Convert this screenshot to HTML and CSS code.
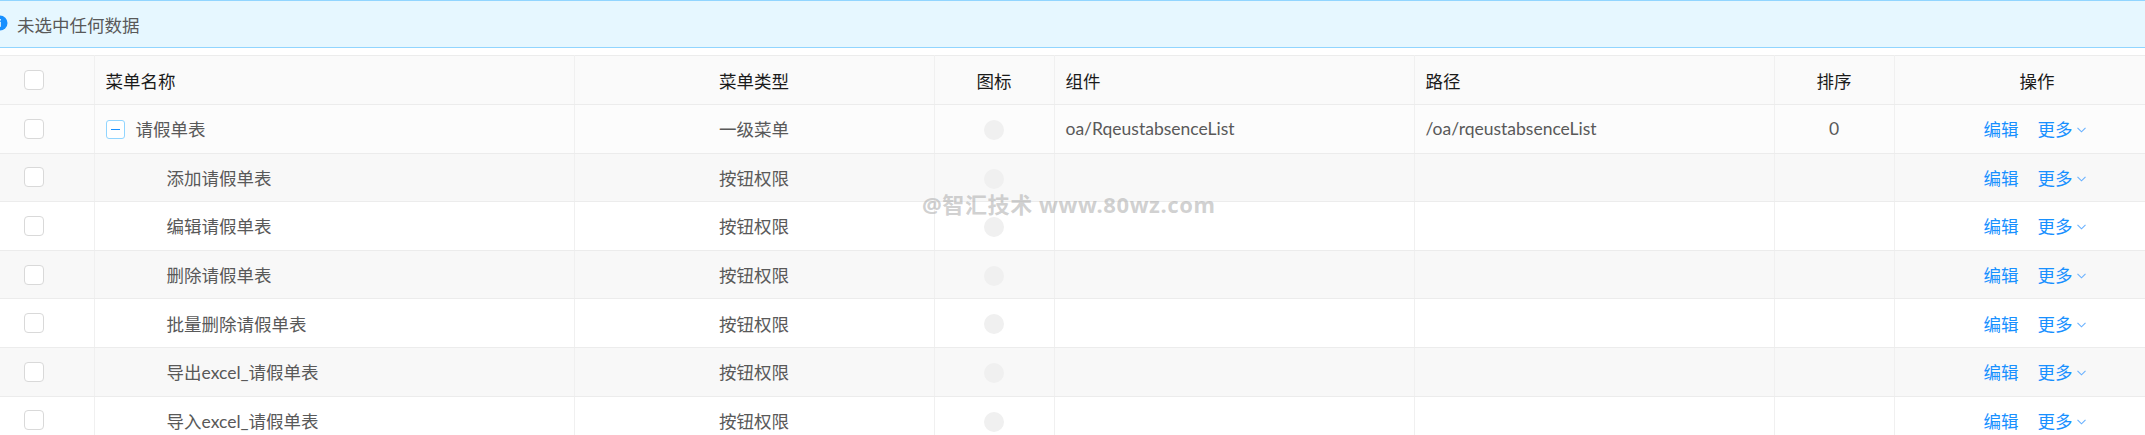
FILE: index.html
```html
<!DOCTYPE html>
<html lang="zh-CN">
<head>
    <meta charset="UTF-8">
    <title>菜单管理</title>
    <link rel="stylesheet" href="styles.css">
</head>
<body>
    <div class="page">
        <div class="alert">
            <svg class="alert-icon" width="16" height="16" viewBox="0 0 16 16"><circle cx="8" cy="8" r="7.5" fill="#1890ff"/><rect x="7.2" y="6.8" width="1.6" height="5" fill="#fff"/><rect x="7.2" y="4" width="1.6" height="1.6" fill="#fff"/></svg>
            <span>未选中任何数据</span>
        </div>

        <table class="menu-table">
            <colgroup>
                <col style="width:94px">
                <col style="width:480px">
                <col style="width:360px">
                <col style="width:120px">
                <col style="width:360px">
                <col style="width:360px">
                <col style="width:120px">
                <col style="width:286px">
            </colgroup>
            <thead>
                <tr>
                    <th class="col-check"><span class="checkbox"></span></th>
                    <th>菜单名称</th>
                    <th class="center">菜单类型</th>
                    <th class="center">图标</th>
                    <th>组件</th>
                    <th>路径</th>
                    <th class="center">排序</th>
                    <th class="center">操作</th>
                </tr>
            </thead>
            <tbody>
                <tr class="row-parent">
                    <td class="col-check"><span class="checkbox"></span></td>
                    <td><span class="tree-toggle"></span><span class="name">请假单表</span></td>
                    <td class="center">一级菜单</td>
                    <td class="center"><span class="icon-dot"></span></td>
                    <td>oa/RqeustabsenceList</td>
                    <td>/oa/rqeustabsenceList</td>
                    <td class="center">0</td>
                    <td class="actions"><a>编辑</a><a>更多<svg class="chevron" width="9" height="6" viewBox="0 0 9 6"><polyline points="0.5,0.8 4.5,4.8 8.5,0.8" fill="none" stroke="#69b1ff" stroke-width="1.1"/></svg></a></td>
                </tr>
                <tr class="row-alt">
                    <td class="col-check"><span class="checkbox"></span></td>
                    <td class="child">添加请假单表</td>
                    <td class="center">按钮权限</td>
                    <td class="center"><span class="icon-dot"></span></td>
                    <td></td>
                    <td></td>
                    <td></td>
                    <td class="actions"><a>编辑</a><a>更多<svg class="chevron" width="9" height="6" viewBox="0 0 9 6"><polyline points="0.5,0.8 4.5,4.8 8.5,0.8" fill="none" stroke="#69b1ff" stroke-width="1.1"/></svg></a></td>
                </tr>
                <tr>
                    <td class="col-check"><span class="checkbox"></span></td>
                    <td class="child">编辑请假单表</td>
                    <td class="center">按钮权限</td>
                    <td class="center"><span class="icon-dot"></span></td>
                    <td></td>
                    <td></td>
                    <td></td>
                    <td class="actions"><a>编辑</a><a>更多<svg class="chevron" width="9" height="6" viewBox="0 0 9 6"><polyline points="0.5,0.8 4.5,4.8 8.5,0.8" fill="none" stroke="#69b1ff" stroke-width="1.1"/></svg></a></td>
                </tr>
                <tr class="row-alt">
                    <td class="col-check"><span class="checkbox"></span></td>
                    <td class="child">删除请假单表</td>
                    <td class="center">按钮权限</td>
                    <td class="center"><span class="icon-dot"></span></td>
                    <td></td>
                    <td></td>
                    <td></td>
                    <td class="actions"><a>编辑</a><a>更多<svg class="chevron" width="9" height="6" viewBox="0 0 9 6"><polyline points="0.5,0.8 4.5,4.8 8.5,0.8" fill="none" stroke="#69b1ff" stroke-width="1.1"/></svg></a></td>
                </tr>
                <tr>
                    <td class="col-check"><span class="checkbox"></span></td>
                    <td class="child">批量删除请假单表</td>
                    <td class="center">按钮权限</td>
                    <td class="center"><span class="icon-dot"></span></td>
                    <td></td>
                    <td></td>
                    <td></td>
                    <td class="actions"><a>编辑</a><a>更多<svg class="chevron" width="9" height="6" viewBox="0 0 9 6"><polyline points="0.5,0.8 4.5,4.8 8.5,0.8" fill="none" stroke="#69b1ff" stroke-width="1.1"/></svg></a></td>
                </tr>
                <tr class="row-alt">
                    <td class="col-check"><span class="checkbox"></span></td>
                    <td class="child">导出excel_请假单表</td>
                    <td class="center">按钮权限</td>
                    <td class="center"><span class="icon-dot"></span></td>
                    <td></td>
                    <td></td>
                    <td></td>
                    <td class="actions"><a>编辑</a><a>更多<svg class="chevron" width="9" height="6" viewBox="0 0 9 6"><polyline points="0.5,0.8 4.5,4.8 8.5,0.8" fill="none" stroke="#69b1ff" stroke-width="1.1"/></svg></a></td>
                </tr>
                <tr>
                    <td class="col-check"><span class="checkbox"></span></td>
                    <td class="child">导入excel_请假单表</td>
                    <td class="center">按钮权限</td>
                    <td class="center"><span class="icon-dot"></span></td>
                    <td></td>
                    <td></td>
                    <td></td>
                    <td class="actions"><a>编辑</a><a>更多<svg class="chevron" width="9" height="6" viewBox="0 0 9 6"><polyline points="0.5,0.8 4.5,4.8 8.5,0.8" fill="none" stroke="#69b1ff" stroke-width="1.1"/></svg></a></td>
                </tr>
            </tbody>
        </table>

        <div class="watermark">@智汇技术 www.80wz.com</div>
    </div>
</body>
</html>
```

FILE: styles.css
```css
body {
    margin: 0;
    font-family: "Lato", "Noto Sans CJK SC", sans-serif;
    font-size: 17.5px;
    color: #595959;
    background-color: white;
    overflow: hidden;
}
.page {
    position: relative;
    width: 2145px;
}

/* alert bar */
.alert {
    display: flex;
    align-items: center;
    gap: 9px;
    height: 46px;
    background-color: #e6f7ff;
    border-top: 1px solid #91d5ff;
    border-bottom: 1px solid #91d5ff;
    color: #595959;
}
.alert-icon {
    margin-left: -8px;
    margin-top: -2px;
}

/* table */
.menu-table {
    margin-top: 7px;
    table-layout: fixed;
    border-collapse: collapse;
    width: 2180px;
}
.menu-table th,
.menu-table td {
    padding: 0 11px;
    border-right: 1px solid #f0f0f0;
    border-bottom: 1px solid #ececec;
    text-align: left;
    white-space: nowrap;
}
.menu-table thead tr {
    height: 49px;
}
.menu-table th {
    background-color: #fafafa;
    color: #1a1a1a;
    font-weight: 400;
    border-top: 1px solid #ececec;
}
.menu-table tbody tr {
    height: 48.6px;
    background-color: white;
}
.menu-table tbody tr.row-parent {
    background-color: #fcfcfc;
}
.menu-table tbody tr.row-alt {
    background-color: #f8f8f8;
}
.menu-table .center {
    text-align: center;
}
.menu-table .col-check {
    padding-left: 24px;
}

.checkbox {
    display: block;
    width: 18px;
    height: 18px;
    border: 1px solid #d9d9d9;
    border-radius: 4px;
    background-color: white;
}

.tree-toggle {
    display: inline-block;
    position: relative;
    width: 17px;
    height: 17px;
    border: 1px solid #91d5ff;
    border-radius: 3px;
    background-color: white;
    vertical-align: -3px;
    margin-right: 11px;
}
.tree-toggle::after {
    content: "";
    position: absolute;
    left: 4px;
    right: 4px;
    top: 8px;
    height: 1px;
    background-color: #1890ff;
}

.child {
    padding-left: 72px !important;
}

.icon-dot {
    display: inline-block;
    width: 20px;
    height: 20px;
    border-radius: 50%;
    background-color: #f0f0f0;
    vertical-align: middle;
}

.actions {
    padding-left: 89px !important;
}
.actions a {
    color: #1890ff;
    cursor: pointer;
    margin-right: 19px;
}
.chevron {
    margin-left: 4px;
    vertical-align: 3px;
}

.watermark {
    position: absolute;
    left: 922px;
    top: 187px;
    font-family: "Noto Sans", "Noto Sans CJK SC", sans-serif;
    font-weight: bold;
    font-size: 22px;
    letter-spacing: 0.6px;
    color: rgba(170, 170, 170, 0.55);
    pointer-events: none;
}
```
